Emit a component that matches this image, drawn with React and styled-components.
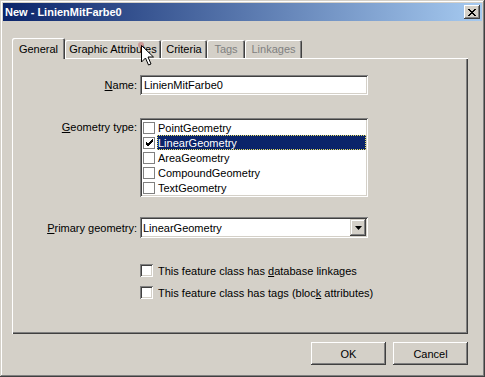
import React from 'react'
import styled, { createGlobalStyle } from 'styled-components'

const GlobalStyle = createGlobalStyle`
  body {
    margin: 0;
    font-family: "Liberation Sans", Arial, sans-serif;
    font-size: 11px;
    color: #000;
    background: #d4d0c8;
  }
`

const Window = styled.div`
  position: relative;
  box-sizing: border-box;
  width: 485px;
  height: 377px;
  padding: 3px;
  background: #d4d0c8;
  box-shadow: inset -1px -1px #404040, inset 1px 1px #d4d0c8,
    inset -2px -2px #808080, inset 2px 2px #fff;
  display: flex;
  flex-direction: column;
`

const TitleBar = styled.div`
  height: 18px;
  display: flex;
  align-items: center;
  justify-content: space-between;
  padding: 0 2px 0 2px;
  background: linear-gradient(to right, #0a246a, #a6caf0);
  color: #fff;
  font-weight: bold;
  font-size: 11px;
`

const CloseBtn = styled.div`
  width: 16px;
  height: 14px;
  background: #d4d0c8;
  box-shadow: inset -1px -1px #404040, inset 1px 1px #fff, inset -2px -2px #808080;
  display: flex;
  align-items: center;
  justify-content: center;
`

const Body = styled.div`
  padding: 17px 14px 0 9px;
  display: flex;
  flex-direction: column;
`

const TabStrip = styled.div`
  display: flex;
  align-items: flex-end;
  height: 20px;
`

const Tab = styled.div`
  box-sizing: border-box;
  width: ${p => p.$w}px;
  height: ${p => (p.$active ? 21 : 18)}px;
  margin-bottom: ${p => (p.$active ? -1 : 0)}px;
  position: relative;
  z-index: ${p => (p.$active ? 1 : 0)};
  background: #d4d0c8;
  border-radius: 2px 2px 0 0;
  box-shadow: inset 1px 1px #fff, inset -1px 0 #404040, inset -2px 0 #808080;
  color: ${p => (p.$disabled ? '#808080' : '#000')};
  display: flex;
  align-items: ${p => (p.$active ? 'flex-start' : 'center')};
  padding-top: ${p => (p.$active ? 5 : 0)}px;
  justify-content: center;
  white-space: nowrap;
`

const Panel = styled.div`
  box-sizing: border-box;
  width: 456px;
  height: 276px;
  padding-top: 17px;
  box-shadow: inset 1px 1px #fff, inset -1px -1px #404040, inset -2px -2px #808080;
  display: flex;
  flex-direction: column;
`

const Row = styled.div`
  display: grid;
  grid-template-columns: 125px 228px;
  column-gap: 3px;
  margin-top: ${p => p.$top || 0}px;
  align-items: ${p => p.$align || 'center'};
`

const Label = styled.div`
  text-align: right;
  white-space: nowrap;
  padding-top: ${p => p.$pt || 0}px;
`

const Sunken = styled.div`
  box-sizing: border-box;
  background: #fff;
  box-shadow: inset 1px 1px #808080, inset -1px -1px #fff,
    inset 2px 2px #404040, inset -2px -2px #d4d0c8;
`

const TextInput = styled(Sunken)`
  height: 20px;
  padding: 0 4px;
  display: flex;
  align-items: center;
`

const ListBox = styled(Sunken)`
  height: 79px;
  padding: 2px;
`

const ListItem = styled.div`
  height: 15px;
  display: flex;
  align-items: center;
`

const ItemText = styled.div`
  flex: 1;
  height: 15px;
  box-sizing: border-box;
  margin-left: 2px;
  padding-left: 1px;
  display: flex;
  align-items: center;
  white-space: nowrap;
  overflow: hidden;
  background: ${p => (p.$selected ? '#0a246a' : 'transparent')};
  color: ${p => (p.$selected ? '#fff' : '#000')};
  outline: ${p => (p.$selected ? '1px dotted #e8e060' : 'none')};
  outline-offset: -1px;
`

const SmallBox = styled.div`
  box-sizing: border-box;
  width: 12px;
  height: 12px;
  margin-left: 1px;
  background: #fff;
  border: 1px solid #808080;
  display: flex;
  align-items: center;
  justify-content: center;
`

const Combo = styled(Sunken)`
  height: 21px;
  padding: 2px 2px 2px 3px;
  display: flex;
  align-items: center;
  justify-content: space-between;
`

const DropBtn = styled.div`
  width: 16px;
  height: 17px;
  background: #d4d0c8;
  box-shadow: inset -1px -1px #404040, inset 1px 1px #d4d0c8,
    inset -2px -2px #808080, inset 2px 2px #fff;
  display: flex;
  align-items: center;
  justify-content: center;
`

const CheckRow = styled.div`
  display: flex;
  align-items: center;
  gap: 5px;
  height: 13px;
  white-space: nowrap;
`

const CheckBox = styled.div`
  width: 13px;
  height: 13px;
  flex: none;
  box-sizing: border-box;
  background: #fff;
  box-shadow: inset 1px 1px #808080, inset -1px -1px #fff,
    inset 2px 2px #404040, inset -2px -2px #d4d0c8;
`

const ButtonRow = styled.div`
  display: flex;
  justify-content: flex-end;
  gap: 7px;
  margin-top: 8px;
`

const Button = styled.div`
  width: 75px;
  height: 23px;
  box-sizing: border-box;
  background: #d4d0c8;
  box-shadow: inset -1px -1px #404040, inset 1px 1px #fff, inset -2px -2px #808080;
  display: flex;
  align-items: center;
  justify-content: center;
`

const Cursor = styled.svg`
  position: absolute;
  left: 137px;
  top: 41px;
  pointer-events: none;
`

const tabs = [
  { name: 'General', w: 53, active: true },
  { name: 'Graphic Attributes', w: 96 },
  { name: 'Criteria', w: 46 },
  { name: 'Tags', w: 38, disabled: true },
  { name: 'Linkages', w: 57, disabled: true },
]

const geometries = ['PointGeometry', 'LinearGeometry', 'AreaGeometry', 'CompoundGeometry', 'TextGeometry']

const Check = () => (
  <svg width="9" height="9" viewBox="0 0 9 9">
    <path d="M1 4 L3 6 L8 1 M1 5 L3 7 L8 2 M1 6 L3 8 L8 3" stroke="#000" strokeWidth="1" fill="none" />
  </svg>
)

const App = () => {
  return (
    <Window>
      <GlobalStyle />
      <TitleBar>
        <span>New - LinienMitFarbe0</span>
        <CloseBtn>
          <svg width="8" height="7" viewBox="0 0 8 7">
            <path d="M0 0 L7 7 M1 0 L8 7 M7 0 L0 7 M8 0 L1 7" stroke="#000" strokeWidth="1" />
          </svg>
        </CloseBtn>
      </TitleBar>
      <Body>
        <TabStrip>
          {tabs.map(t => (
            <Tab key={t.name} $w={t.w} $active={t.active} $disabled={t.disabled}>{t.name}</Tab>
          ))}
        </TabStrip>
        <Panel>
          <Row>
            <Label><u>N</u>ame:</Label>
            <TextInput>LinienMitFarbe0</TextInput>
          </Row>
          <Row $top={23} $align="start">
            <Label $pt={3}><u>G</u>eometry type:</Label>
            <ListBox>
              {geometries.map(g => (
                <ListItem key={g}>
                  <SmallBox>{g === 'LinearGeometry' && <Check />}</SmallBox>
                  <ItemText $selected={g === 'LinearGeometry'}>{g}</ItemText>
                </ListItem>
              ))}
            </ListBox>
          </Row>
          <Row $top={20}>
            <Label><u>P</u>rimary geometry:</Label>
            <Combo>
              <span>LinearGeometry</span>
              <DropBtn>
                <svg width="7" height="4" viewBox="0 0 7 4"><path d="M0 0 H7 L3.5 4 Z" fill="#000" /></svg>
              </DropBtn>
            </Combo>
          </Row>
          <Row $top={26}>
            <span />
            <CheckRow>
              <CheckBox />
              <span>This feature class has <u>d</u>atabase linkages</span>
            </CheckRow>
          </Row>
          <Row $top={9}>
            <span />
            <CheckRow>
              <CheckBox />
              <span>This feature class has tags (bloc<u>k</u> attributes)</span>
            </CheckRow>
          </Row>
        </Panel>
        <ButtonRow>
          <Button>OK</Button>
          <Button>Cancel</Button>
        </ButtonRow>
      </Body>
      <Cursor width="20" height="28" viewBox="0 0 20 28">
        <circle cx="4" cy="4" r="3" fill="#c06060" opacity="0.5" />
        <path d="M4.5 4.5 V21 L8.5 17 L11.5 24 L14 23 L11 16 H16.5 Z" fill="#fff" stroke="#000" strokeWidth="1" />
      </Cursor>
    </Window>
  )
}

export default App
